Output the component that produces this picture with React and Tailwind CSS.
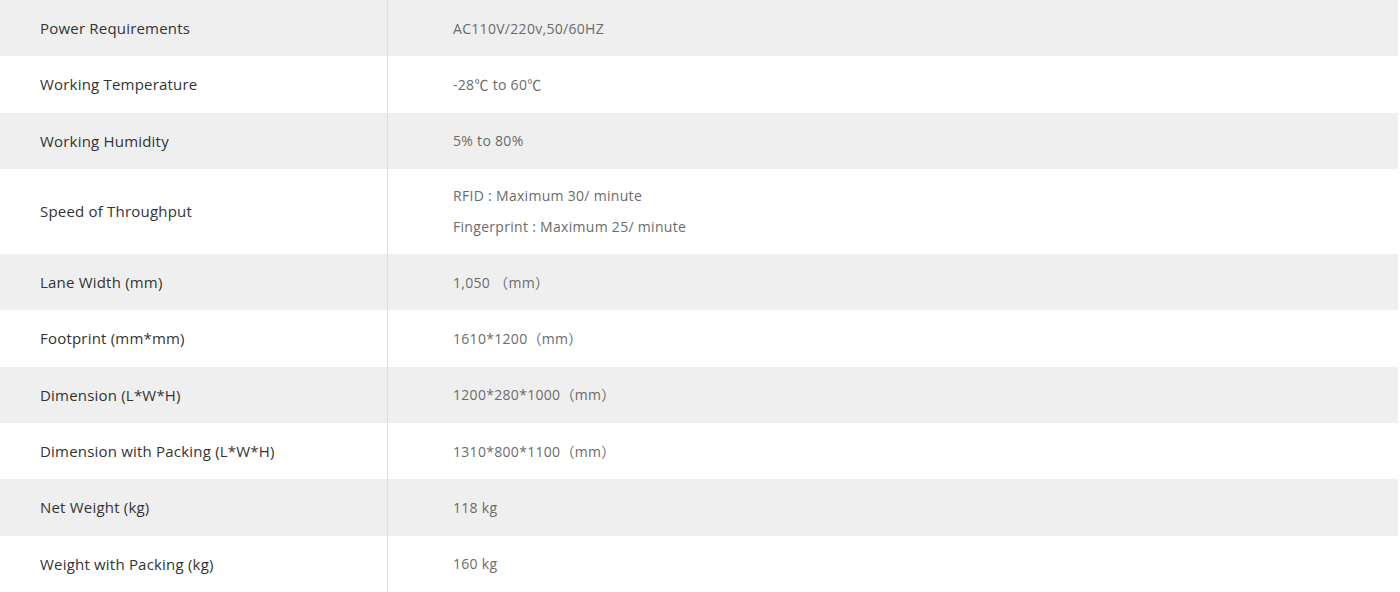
import React from "react";

const specs = [
  { label: "Power Requirements", value: ["AC110V/220v,50/60HZ"] },
  { label: "Working Temperature", value: ["-28℃ to 60℃"] },
  { label: "Working Humidity", value: ["5% to 80%"] },
  {
    label: "Speed of Throughput",
    value: ["RFID : Maximum 30/ minute", "Fingerprint : Maximum 25/ minute"],
  },
  { label: "Lane Width (mm)", value: ["1,050 （mm）"] },
  { label: "Footprint (mm*mm)", value: ["1610*1200（mm）"] },
  { label: "Dimension (L*W*H)", value: ["1200*280*1000（mm）"] },
  { label: "Dimension with Packing (L*W*H)", value: ["1310*800*1100（mm）"] },
  { label: "Net Weight (kg)", value: ["118 kg"] },
  { label: "Weight with Packing (kg)", value: ["160 kg"] },
];

const App = () => {
  return (
    <div className="w-full bg-white" style={{ fontFamily: '"Open Sans", "Noto Sans CJK SC", sans-serif' }}>
      <div className="w-[1398px] flex flex-col">
        {specs.map((row, i) => (
          <div
            key={row.label}
            className={`flex ${row.value.length > 1 ? "h-[85px]" : "h-[56.33px]"} ${
              i % 2 === 0 ? "bg-[#efefef]" : "bg-white"
            }`}
          >
            <div className="w-[388px] shrink-0 flex items-center pl-10 border-r border-[#dddddd] text-[15px] tracking-[0.2px] text-[#333333]">
              {row.label}
            </div>
            <div className="flex flex-col justify-center pl-[65px] text-[14px] tracking-[0.3px] text-[#6b6b6b] leading-[31px]">
              {row.value.map((v) => (
                <div key={v}>{v}</div>
              ))}
            </div>
          </div>
        ))}
      </div>
    </div>
  );
};

export default App;
